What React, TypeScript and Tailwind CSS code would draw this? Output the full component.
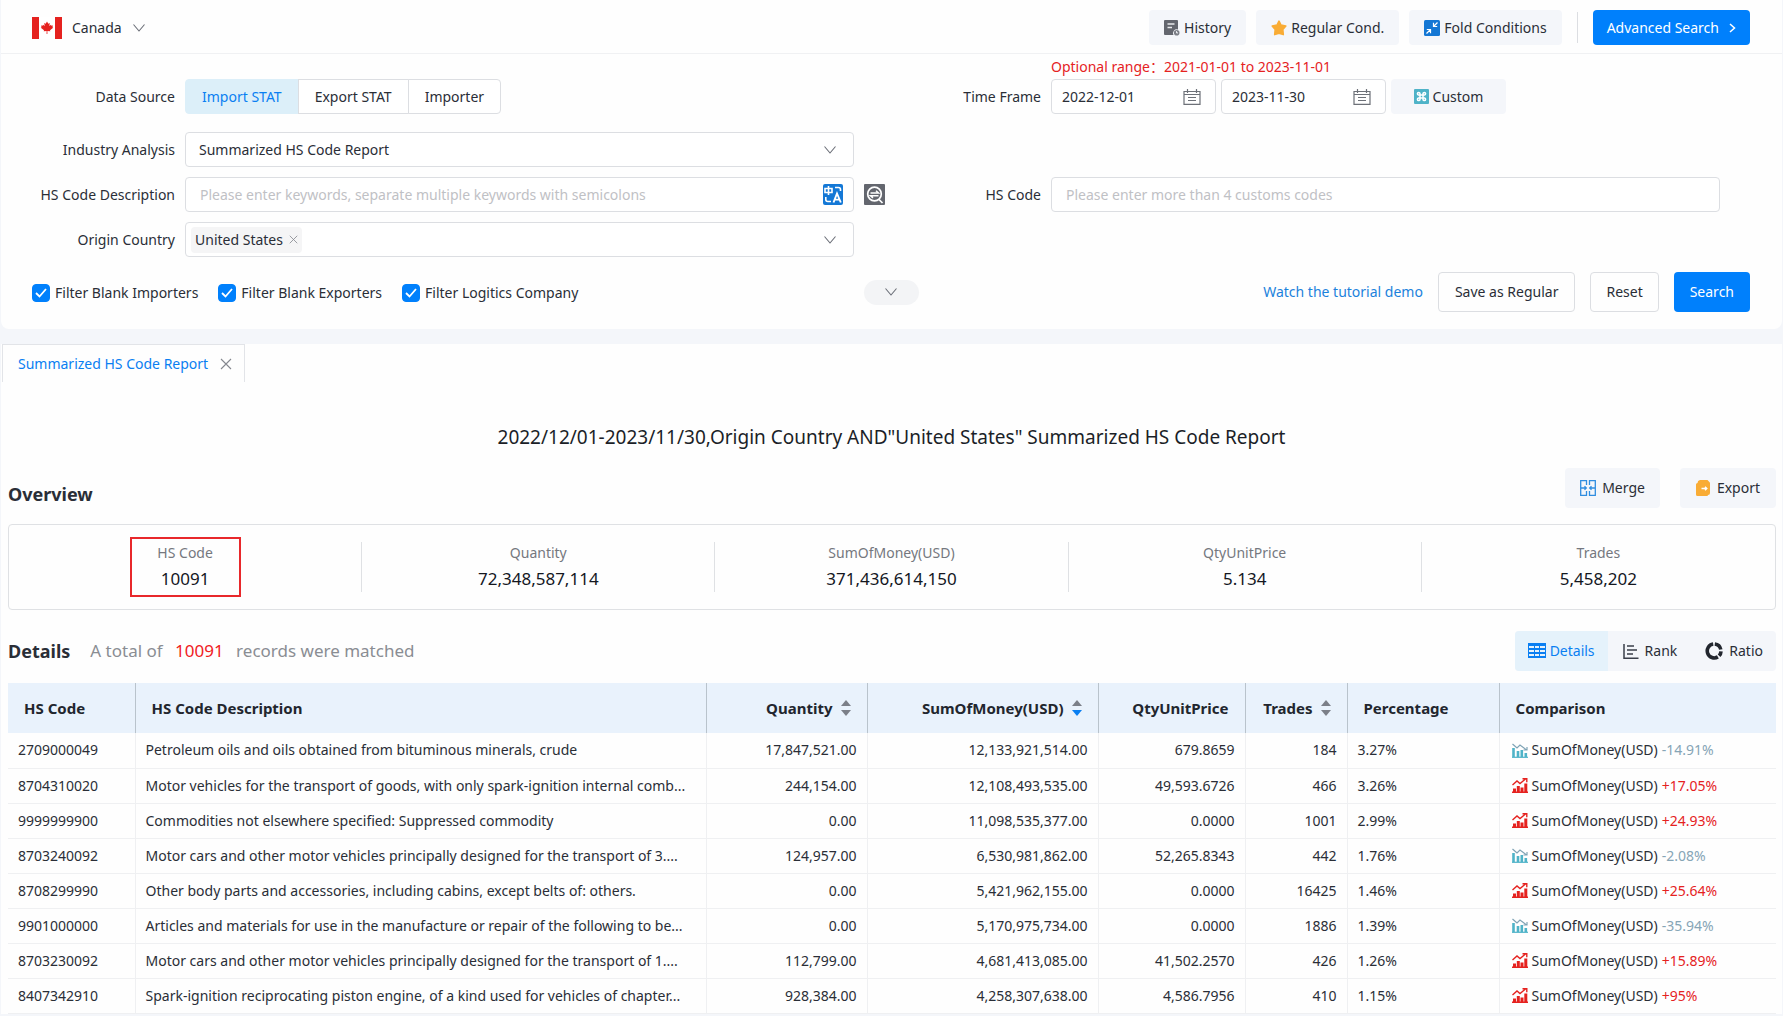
import { useState } from "react";
import type { ReactNode } from "react";
import clsx from "clsx";

const overview = [
  { label: "HS Code", value: "10091", marked: true },
  { label: "Quantity", value: "72,348,587,114" },
  { label: "SumOfMoney(USD)", value: "371,436,614,150" },
  { label: "QtyUnitPrice", value: "5.134" },
  { label: "Trades", value: "5,458,202" },
];

const rows = [
  ["2709000049", "Petroleum oils and oils obtained from bituminous minerals, crude", "17,847,521.00", "12,133,921,514.00", "679.8659", "184", "3.27%", "-14.91%"],
  ["8704310020", "Motor vehicles for the transport of goods, with only spark-ignition internal comb...", "244,154.00", "12,108,493,535.00", "49,593.6726", "466", "3.26%", "+17.05%"],
  ["9999999900", "Commodities not elsewhere specified: Suppressed commodity", "0.00", "11,098,535,377.00", "0.0000", "1001", "2.99%", "+24.93%"],
  ["8703240092", "Motor cars and other motor vehicles principally designed for the transport of 3....", "124,957.00", "6,530,981,862.00", "52,265.8343", "442", "1.76%", "-2.08%"],
  ["8708299990", "Other body parts and accessories, including cabins, except belts of: others.", "0.00", "5,421,962,155.00", "0.0000", "16425", "1.46%", "+25.64%"],
  ["9901000000", "Articles and materials for use in the manufacture or repair of the following to be...", "0.00", "5,170,975,734.00", "0.0000", "1886", "1.39%", "-35.94%"],
  ["8703230092", "Motor cars and other motor vehicles principally designed for the transport of 1....", "112,799.00", "4,681,413,085.00", "41,502.2570", "426", "1.26%", "+15.89%"],
  ["8407342910", "Spark-ignition reciprocating piston engine, of a kind used for vehicles of chapter...", "928,384.00", "4,258,307,638.00", "4,586.7956", "410", "1.15%", "+95%"],
];

const sources = ["Import STAT", "Export STAT", "Importer"];
const filters = ["Filter Blank Importers", "Filter Blank Exporters", "Filter Logitics Company"];

const field = "h-[35px] w-full rounded border border-[#dcdee2] bg-white";
const softButton = "flex items-center justify-center rounded bg-[#f4f6fa] whitespace-nowrap";

function Chevron() {
  return (
    <svg width="14" height="10" viewBox="0 0 14 10" fill="none" stroke="#6b6f78" strokeWidth="1.1">
      <path d="M1.500 1.500 7 8l5.500-6.500" />
    </svg>
  );
}

function Cross({ size }: { size: number }) {
  return (
    <svg width={size} height={size} viewBox="0 0 12 12" stroke="#85888f" strokeWidth="1.1">
      <path d="M1 1l10 10M11 1 1 11" />
    </svg>
  );
}

function Flag() {
  return (
    <svg width="30" height="22" viewBox="0 0 30 22">
      <path fill="#fff" d="M0 0h30v22H0z" />
      <path fill="#e5221f" d="M0 0h7v22H0zM23 0h7v22h-7z" />
      <path
        fill="#e5221f"
        d="m15 4.500 1.300 2.300 1.500-.7-.5 3 1.700-1.400.4 1 1.600-.2-.6 1.700.8.600-3.200 2.500.3 1-2.900-.4v3h-.8v-3l-2.900.4.3-1-3.200-2.500.8-.6-.6-1.700 1.600.2.400-1 1.700 1.400-.5-3 1.500.7z"
      />
    </svg>
  );
}

function HistoryIcon() {
  return (
    <svg width="16" height="16" viewBox="0 0 16 16">
      <path fill="#63666e" d="M1 0h12a1 1 0 0 1 1 1v8.500a3.800 3.800 0 0 0-4.500 5.500H1a1 1 0 0 1-1-1V1a1 1 0 0 1 1-1z" />
      <path stroke="#e8e9ec" strokeWidth="1.400" d="M3.500 4h7M3.500 7.500h4.500" />
      <circle cx="12.700" cy="12.700" r="2.800" fill="#7b7e86" />
      <path stroke="#f4f6fa" fill="none" d="M12.500 11.200v1.700h1.500" />
    </svg>
  );
}

function StarIcon() {
  return (
    <svg width="16" height="16" viewBox="0 0 16 16" fill="#f9ac35" stroke="#f9ac35" strokeWidth="1.600" strokeLinejoin="round">
      <path d="m8 1.200 2 3.900 4.800.9-3 3.600.5 5-4.300-1.400-4.300 1.400.5-5-3-3.600 4.800-.9z" />
    </svg>
  );
}

function FoldIcon() {
  return (
    <svg width="16" height="16" viewBox="0 0 16 16" fill="none" stroke="#fff" strokeWidth="1.200">
      <rect width="16" height="16" rx="1.500" fill="#1477d4" stroke="none" />
      <path d="M13.500 2.500 9.500 6.500M9.500 2.800v3.700h3.700M2.500 13.500l4-4M2.800 9.500h3.700v3.700" />
    </svg>
  );
}

function CalendarIcon() {
  return (
    <svg className="shrink-0" width="18" height="16" viewBox="0 0 18 16" fill="none" stroke="#6d7178" strokeWidth="1.200">
      <path d="M1 2.500h16v12.800H1zM1 5.500h16M4.500 0v4M13.500 0v4M5 8.500h8M5 11.500h8" />
    </svg>
  );
}

function CustomIcon() {
  return (
    <svg width="15" height="15" viewBox="0 0 15 15" fill="none" stroke="#fff" strokeWidth="1.500">
      <rect width="15" height="15" rx="1" fill="#4fb3c8" stroke="none" />
      <path d="M6 6H4.500A1.300 1.300 0 1 1 6 4.500v6A1.300 1.300 0 1 1 4.500 9h6A1.300 1.300 0 1 1 9 10.500v-6A1.300 1.300 0 1 1 10.500 6H6" />
    </svg>
  );
}

function TranslateIcon() {
  return (
    <svg width="20" height="21" viewBox="0 0 20 21" fill="none" stroke="#fff" strokeWidth="1.600">
      <rect width="20" height="21" rx="2" fill="#1478d6" stroke="none" />
      <path d="M2 4.500h7v4H2zM5.500 2v9M12 3.500h3.500a2 2 0 0 1 2 2V7M2.800 13v2.500a2 2 0 0 0 2 2H8" />
      <path strokeWidth="1.900" d="m10.500 18.500 3.500-9 3.800 9M11.800 15.600h4.600" />
    </svg>
  );
}

function SynonymIcon() {
  return (
    <svg width="21" height="21" viewBox="0 0 21 21" fill="none" stroke="#fff" strokeWidth="1.700">
      <rect width="21" height="21" rx="1" fill="#63666e" stroke="none" />
      <circle cx="10.500" cy="10" r="6.800" />
      <path d="m15 15.500 3.500 3.500" />
      <path strokeWidth="1.500" d="M6.500 9h8L12 6.800M14.500 11.700h-8L9 13.900" />
    </svg>
  );
}

function MergeIcon() {
  return (
    <svg width="16" height="16" viewBox="0 0 16 16" fill="none" stroke="#2f8de0" strokeWidth="1.300">
      <path d="M6.500 5V.7H.7v14.600h5.800V11M9.500 5V.7h5.800v14.600H9.500V11M.7 8h5.500M15.300 8H9.800M4.500 6.200 6.300 8 4.500 9.800M11.500 6.200 9.700 8l1.800 1.800" />
    </svg>
  );
}

function ExportIcon() {
  return (
    <svg width="15" height="16" viewBox="0 0 15 16">
      <path fill="#f9ac35" d="M4 0h7.500L14 2.800V13a2 2 0 0 1-2 2 1 1 0 0 1-1 1H1.500A1.500 1.500 0 0 1 0 14.500v-10A1.500 1.500 0 0 1 1.500 3 3 3 0 0 1 4 0z" />
      <path stroke="#fff" strokeWidth="1.400" fill="none" d="M5.500 8.500h5M9 6.800l1.800 1.700L9 10.200" />
    </svg>
  );
}

function DetailsIcon() {
  return (
    <svg width="18" height="16" viewBox="0 0 18 16" fill="none" stroke="#0a7ff2">
      <path strokeWidth="3" d="M0 1.500h18" />
      <path strokeWidth="2" d="M0 6h18M0 10h18M0 14h18" />
      <path strokeWidth="1" d="M.5 1v14M6.500 3v12M11.500 3v12M17.500 1v14" />
    </svg>
  );
}

function RankIcon() {
  return (
    <svg width="16" height="15" viewBox="0 0 16 15" fill="none" stroke="#3a3f4a" strokeWidth="1.500">
      <path d="M1 0v14.200h14.500M4 2h7M4 6h10M4 10h6" />
    </svg>
  );
}

function RatioIcon() {
  return (
    <svg width="18" height="18" viewBox="0 0 18 18" fill="none" stroke="#22262e" strokeWidth="3.600">
      <path d="M9.800 2A7 7 0 0 1 15.800 7.500M16 9.300a7 7 0 0 1-1.900 4.500M12.900 14.900A7 7 0 1 1 8.200 2" />
    </svg>
  );
}

function TrendIcon({ up }: { up: boolean }) {
  return up ? (
    <svg width="16" height="15" viewBox="0 0 16 15" fill="none" stroke="#e5221f" strokeWidth="1.400">
      <path d="M0 14.300h16M.5 7 5 3l3 2.500 5.500-4.500M10.500.8h4.300v3.500" />
      <path strokeWidth="3" d="M2.500 10.500V14M6.300 8v6M10 9.500V14M13.800 5.500V14" />
    </svg>
  ) : (
    <svg width="16" height="15" viewBox="0 0 16 15" fill="none" stroke="#7fa3b5" strokeWidth="1.200">
      <path d="M.5 1 5 5l3-3 6.500 5M11.500 7h3.500V4" />
      <path stroke="#4fb3c8" d="M0 14.300h16" />
      <path stroke="#4fb3c8" strokeWidth="2.600" d="M1.500 5v9M6 8v6M9.800 7v7M13.800 10v4" />
    </svg>
  );
}

function SortIcon({ desc }: { desc?: boolean }) {
  return (
    <svg width="10" height="16" viewBox="0 0 10 16" fill="#7b7f88">
      <path d="M0 6 5 0l5 6z" />
      <path d="M0 10h10l-5 6z" fill={desc ? "#0a7ff2" : "#7b7f88"} />
    </svg>
  );
}

function DateField({ label, value }: { label: string; value: string }) {
  return (
    <span className="flex h-[35px] w-[165px] items-center rounded border border-[#dcdee2] bg-white pr-3.5 pl-2.5">
      <input aria-label={label} defaultValue={value} className="w-full min-w-0 outline-none" />
      <CalendarIcon />
    </span>
  );
}

function Th({ children, right, sort, desc }: { children: ReactNode; right?: boolean; sort?: boolean; desc?: boolean }) {
  return (
    <th className="border-r border-[#b9c3cc] px-4 font-bold last:border-r-0">
      <span className={clsx("flex items-center gap-2", right && "justify-end")}>
        {children}
        {sort && (
          <button aria-label="Sort" className="flex">
            <SortIcon desc={desc} />
          </button>
        )}
      </span>
    </th>
  );
}

export default function App() {
  const [source, setSource] = useState("Import STAT");

  return (
    <div className="min-h-screen bg-[#f4f6fa] px-px font-['Noto_Sans','Noto_Sans_CJK_SC',sans-serif] text-[14px] leading-5 text-[#2a2e37]">
      <section className="rounded-b-lg bg-[#fefefe]">
        <header className="flex h-[54px] items-center border-b border-[#f0f1f3] pt-0.5 pr-8 pl-[31px]">
          <button className="flex items-center gap-2.5">
            <Flag />
            Canada
            <Chevron />
          </button>
          <div className="ml-auto flex h-[35px] items-stretch gap-2.5">
            <button className={clsx(softButton, "gap-1 px-[15px]")}>
              <HistoryIcon />
              History
            </button>
            <button className={clsx(softButton, "gap-1 px-[15px]")}>
              <StarIcon />
              Regular Cond.
            </button>
            <button className={clsx(softButton, "gap-1 px-[15px]")}>
              <FoldIcon />
              Fold Conditions
            </button>
            <span className="mx-[5px] my-0.5 w-px bg-[#dcdee2]" />
            <button className="flex items-center gap-2.5 rounded bg-[#0080fc] px-3.5 text-white">
              Advanced Search
              <svg width="7" height="10" viewBox="0 0 7 10" fill="none" stroke="#fff" strokeWidth="1.500">
                <path d="m1 1 4.500 4L1 9" />
              </svg>
            </button>
          </div>
        </header>

        <div className="grid grid-cols-[174px_1fr_177px_1fr] items-center gap-x-2.5 gap-y-2.5 pt-[25px] pr-[62px]">
          <span id="source" className="mb-2 text-right">Data Source</span>
          <div role="group" aria-labelledby="source" className="mb-2 flex h-[35px]">
            {sources.map((s) => (
              <button
                key={s}
                onClick={() => setSource(s)}
                className={clsx(
                  "-ml-px border px-4 first:ml-0 first:rounded-l last:rounded-r",
                  s === source ? "border-[#dceff9] bg-[#dceff9] text-[#0a7ff2]" : "border-[#dcdee2] bg-white"
                )}
              >
                {s}
              </button>
            ))}
          </div>
          <span id="frame" className="mb-2 text-right">Time Frame</span>
          <div role="group" aria-labelledby="frame" className="relative mb-2 flex gap-[5px]">
            <p className="absolute bottom-full left-0 pb-0.5 whitespace-nowrap text-[#e5221f]">
              Optional range：2021-01-01 to 2023-11-01
            </p>
            <DateField label="From" value="2022-12-01" />
            <DateField label="To" value="2023-11-30" />
            <button className={clsx(softButton, "h-[35px] w-[115px] gap-1")}>
              <CustomIcon />
              Custom
            </button>
          </div>

          <label htmlFor="analysis" className="text-right">Industry Analysis</label>
          <div className="grid items-center">
            <select id="analysis" className={clsx(field, "col-start-1 row-start-1 appearance-none px-[13px] outline-none")}>
              <option>Summarized HS Code Report</option>
            </select>
            <span className="pointer-events-none col-start-1 row-start-1 mr-[17px] justify-self-end">
              <Chevron />
            </span>
          </div>
          <span />
          <span />

          <label htmlFor="description" className="text-right">HS Code Description</label>
          <div className={clsx(field, "flex items-center pr-2.5 pl-3.5")}>
            <input
              id="description"
              placeholder="Please enter keywords, separate multiple keywords with semicolons"
              className="flex-1 outline-none placeholder:text-[#bfc1c5]"
            />
            <button aria-label="Translate">
              <TranslateIcon />
            </button>
          </div>
          <div className="flex items-center justify-between">
            <button aria-label="Synonyms">
              <SynonymIcon />
            </button>
            <label htmlFor="code">HS Code</label>
          </div>
          <input
            id="code"
            placeholder="Please enter more than 4 customs codes"
            className={clsx(field, "px-3.5 outline-none placeholder:text-[#bfc1c5]")}
          />

          <span id="origin" className="text-right">Origin Country</span>
          <div role="group" aria-labelledby="origin" className={clsx(field, "flex items-center justify-between pr-4 pl-[5px]")}>
            <span className="flex h-[26px] items-center gap-1.5 rounded bg-[#f5f5f6] px-1">
              United States
              <button aria-label="Remove United States">
                <Cross size={9} />
              </button>
            </span>
            <button aria-label="Open country list">
              <Chevron />
            </button>
          </div>
        </div>

        <div className="grid grid-cols-[1fr_auto_1fr] items-center pt-[15px] pr-8 pb-[17px] pl-[31px]">
          <div className="flex gap-5 pt-0.5">
            {filters.map((f) => (
              <label key={f} className="flex items-center gap-[5px]">
                <span className="grid place-items-center">
                  <input
                    type="checkbox"
                    defaultChecked
                    className="col-start-1 row-start-1 size-[18px] appearance-none rounded-sm border border-[#0080fc] checked:bg-[#0080fc]"
                  />
                  <svg className="pointer-events-none col-start-1 row-start-1" width="12" height="10" viewBox="0 0 12 10" fill="none" stroke="#fff" strokeWidth="1.800">
                    <path d="m1 5 3.500 3.500L11 1" />
                  </svg>
                </span>
                {f}
              </label>
            ))}
          </div>
          <button aria-label="More conditions" className="flex h-[25px] w-[55px] items-center justify-center rounded-full bg-[#f3f4f6]">
            <Chevron />
          </button>
          <div className="flex items-center justify-end gap-[15px]">
            <a href="#tutorial" className="text-[#1c82dc]">Watch the tutorial demo</a>
            <button className="h-10 rounded border border-[#dcdee2] px-4">Save as Regular</button>
            <button className="h-10 rounded border border-[#dcdee2] px-[15px]">Reset</button>
            <button className="h-10 rounded bg-[#0080fc] px-4 text-white">Search</button>
          </div>
        </div>
      </section>

      <main className="mt-[15px] bg-[#fefefe]">
        <div className="flex px-px">
          <div className="flex h-[38px] items-center gap-3 border-x border-t border-[#e2e4e8] pr-3 pl-[15px]">
            <button className="text-[#0a7ff2]">Summarized HS Code Report</button>
            <button aria-label="Close tab">
              <Cross size={12} />
            </button>
          </div>
        </div>
        <h1 className="pt-[41px] text-center text-[19px] leading-7 text-[#1b1f28]">
          2022/12/01-2023/11/30,Origin Country AND"United States" Summarized HS Code Report
        </h1>

        <div className="pr-1.5 pl-[7px]">
          <div className="flex items-center pt-[17px] pb-4">
            <h2 className="mt-3 text-[18px] font-bold">Overview</h2>
            <div className="ml-auto flex gap-5">
              <button className={clsx(softButton, "h-10 gap-1.5 px-[15px]")}>
                <MergeIcon />
                Merge
              </button>
              <button className={clsx(softButton, "h-10 gap-1.5 px-4")}>
                <ExportIcon />
                Export
              </button>
            </div>
          </div>

          <dl className="grid h-[86px] grid-cols-5 items-center rounded border border-[#dfe1e4]">
            {overview.map((o) => (
              <div key={o.label} className="flex h-[50px] items-center justify-center border-r border-[#dfe1e4] last:border-r-0">
                <div className={clsx("flex h-[60px] min-w-[111px] shrink-0 flex-col items-center gap-1.5 border-2 pt-1", o.marked ? "border-[#e8282b]" : "border-transparent")}>
                  <dt className="text-[#75787f]">{o.label}</dt>
                  <dd className="text-[17px] text-[#14171f]">{o.value}</dd>
                </div>
              </div>
            ))}
          </dl>

          <div className="flex items-center pt-[21px] pb-3">
            <h2 className="text-[18px] font-bold">Details</h2>
            <p className="ml-5 text-[17px] text-[#8a8d93]">
              A total of <span className="mx-2 text-[#f0201e]">10091</span> records were matched
            </p>
            <div className="ml-auto flex h-10 overflow-hidden rounded bg-[#f4f6fa]">
              <button className="flex items-center gap-1 bg-[#e5f2fb] px-[13px] text-[#0a7ff2]">
                <DetailsIcon />
                Details
              </button>
              <button className="flex items-center gap-1.5 px-[15px]">
                <RankIcon />
                Rank
              </button>
              <button className="flex items-center gap-1.5 px-[13px]">
                <RatioIcon />
                Ratio
              </button>
            </div>
          </div>

          <table className="w-full table-fixed border-collapse text-left">
            <colgroup>
              <col className="w-[127px]" />
              <col />
              <col className="w-[161px]" />
              <col className="w-[231px]" />
              <col className="w-[147px]" />
              <col className="w-[102px]" />
              <col className="w-[152px]" />
              <col className="w-[277px]" />
            </colgroup>
            <thead>
              <tr className="h-[50px] bg-[#e9f2fc] text-[15px] text-[#22262e]">
                <Th>HS Code</Th>
                <Th>HS Code Description</Th>
                <Th right sort>Quantity</Th>
                <Th right sort desc>SumOfMoney(USD)</Th>
                <Th right>QtyUnitPrice</Th>
                <Th right sort>Trades</Th>
                <Th>Percentage</Th>
                <Th>Comparison</Th>
              </tr>
            </thead>
            <tbody>
              {rows.map((cells) => (
                <tr key={cells[0]} className="h-[35px] border-b border-[#eff0f2]">
                  {cells.slice(0, 7).map((cell, i) => (
                    <td
                      key={i}
                      className={clsx("overflow-hidden border-r border-[#eff0f2] px-2.5 whitespace-nowrap", i > 1 && i < 6 && "text-right")}
                    >
                      {cell}
                    </td>
                  ))}
                  <td className="px-3">
                    <span className="flex items-center gap-1">
                      <TrendIcon up={cells[7][0] === "+"} />
                      SumOfMoney(USD)
                      <span className={cells[7][0] === "+" ? "text-[#e5221f]" : "text-[#86a5b6]"}>{cells[7]}</span>
                    </span>
                  </td>
                </tr>
              ))}
            </tbody>
          </table>
        </div>
      </main>
    </div>
  );
}
